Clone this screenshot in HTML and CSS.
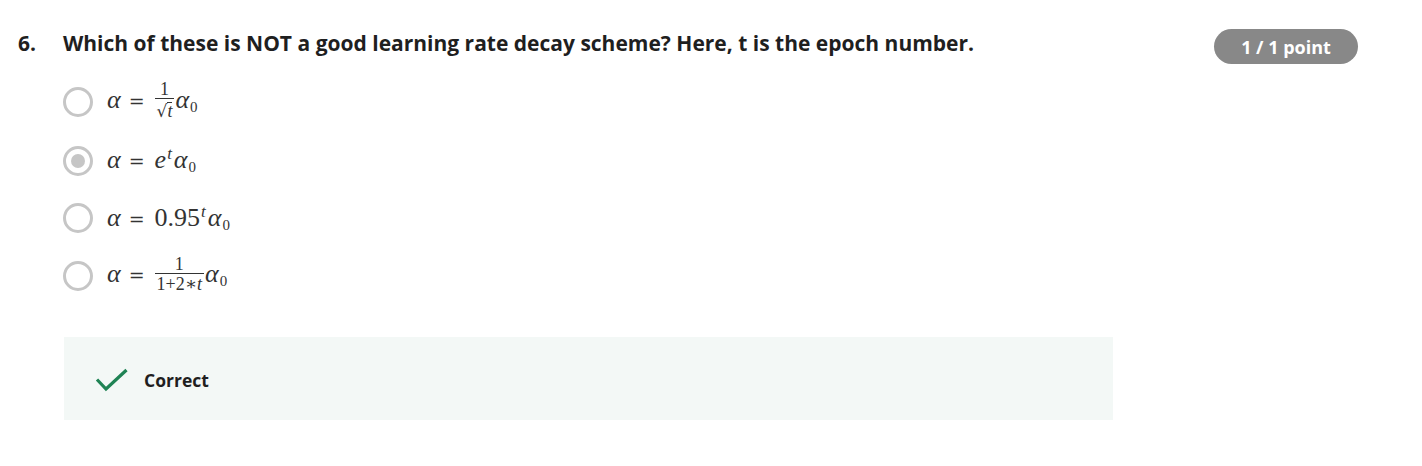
FILE: index.html
```html
<!DOCTYPE html>
<html>
<head>
<meta charset="utf-8">
<link rel="stylesheet" href="styles.css">
</head>
<body>
<div class="page">
  <div class="question">
    <div class="qnum">6.</div>
    <div class="qtext">Which of these is NOT a good learning rate decay scheme? Here, t is the epoch number.</div>
    <div class="badge">1 / 1 point</div>
  </div>
  <div class="options">
    <div class="option">
      <span class="radio"></span>
      <span class="math"><i>α</i><span class="eq">=</span><span class="frac"><span class="num">1</span><span class="den"><span class="sqrt">√</span><span class="rad"><i>t</i></span></span></span><i>α</i><sub>0</sub></span>
    </div>
    <div class="option">
      <span class="radio checked"></span>
      <span class="math"><i>α</i><span class="eq">=</span><i>e</i><sup><i>t</i></sup><i>α</i><sub>0</sub></span>
    </div>
    <div class="option">
      <span class="radio"></span>
      <span class="math"><i>α</i><span class="eq">=</span>0.95<sup><i>t</i></sup><i>α</i><sub>0</sub></span>
    </div>
    <div class="option">
      <span class="radio"></span>
      <span class="math"><i>α</i><span class="eq">=</span><span class="frac"><span class="num">1</span><span class="den">1+2∗<i>t</i></span></span><i>α</i><sub>0</sub></span>
    </div>
  </div>
  <div class="feedback">
    <svg class="check" width="34" height="24" viewBox="0 0 34 24"><path d="M2 11.5 L11 21 L31.5 2" fill="none" stroke="#1f8354" stroke-width="3.2"/></svg>
    <span class="fb-text">Correct</span>
  </div>
</div>
</body>
</html>
```

FILE: styles.css
```css
html, body {
  margin: 0;
  padding: 0;
  background: #fff;
}
body {
  font-family: "Open Sans", "Liberation Sans", sans-serif;
  color: #1f1f1f;
}
.page {
  padding: 29px 64px 0 18px;
}
.question {
  display: flex;
  align-items: flex-start;
}
.qnum {
  width: 45px;
  flex: none;
  font-size: 21px;
  font-weight: 700;
  line-height: 28px;
}
.qtext {
  font-size: 21px;
  font-weight: 700;
  line-height: 28px;
}
.badge {
  margin-left: auto;
  flex: none;
  width: 144px;
  height: 35px;
  box-sizing: border-box;
  border-radius: 18px;
  background: #888888;
  color: #fff;
  font-size: 18px;
  font-weight: 700;
  display: flex;
  align-items: center;
  justify-content: center;
}
.options {
  margin-left: 45px;
  margin-top: 8px;
  display: flex;
  flex-direction: column;
}
.option {
  display: flex;
  align-items: center;
  height: 58px;
}
.option:first-child {
  height: 60px;
}
.option:nth-child(2) {
  height: 57px;
}
.radio {
  flex: none;
  width: 30px;
  height: 30px;
  box-sizing: border-box;
  border: 3px solid #c6c6c6;
  border-radius: 50%;
  margin-right: 14px;
  display: flex;
  align-items: center;
  justify-content: center;
}
.radio.checked::after {
  content: "";
  width: 14px;
  height: 14px;
  border-radius: 50%;
  background: #c6c6c6;
}
.math {
  font-family: "Liberation Serif", "DejaVu Serif", serif;
  font-size: 26px;
  line-height: 30px;
  color: #333;
  display: inline-block;
  white-space: nowrap;
}
.math i {
  font-style: italic;
}
.eq {
  font-family: "DejaVu Serif", serif;
  font-size: 19px;
  margin: 0 10px 0 8px;
}
.math sup {
  font-size: 17px;
  line-height: 0;
  vertical-align: 9px;
  margin-left: 1px;
  margin-right: 2px;
}
.math sub {
  font-size: 15px;
  line-height: 0;
  vertical-align: -4px;
  margin-left: 1px;
}
.frac {
  display: inline-flex;
  flex-direction: column;
  align-items: center;
  font-size: 18px;
  line-height: 16px;
  margin-right: 1px;
  vertical-align: middle;
  position: relative;
  top: -2px;
}
.num {
  padding: 0 2px 1px;
}
.den {
  border-top: 1px solid #333;
  padding: 2px 2px 0;
  display: inline-flex;
  align-items: flex-end;
}
.sqrt {
  font-family: "DejaVu Serif", serif;
  font-size: 17px;
}
.rad {
  border-top: 1px solid #333;
  margin-top: 1px;
}
.feedback {
  margin: 32px 0 0 46px;
  width: 1049px;
  height: 83px;
  background: #f3f8f6;
  display: flex;
  align-items: center;
  padding-left: 31px;
  box-sizing: border-box;
}
.check {
  flex: none;
  margin-right: 15px;
  position: relative;
  top: 1px;
}
.fb-text {
  font-size: 17.5px;
  font-weight: 700;
  color: #1f1f1f;
  position: relative;
  top: 1px;
}
```
